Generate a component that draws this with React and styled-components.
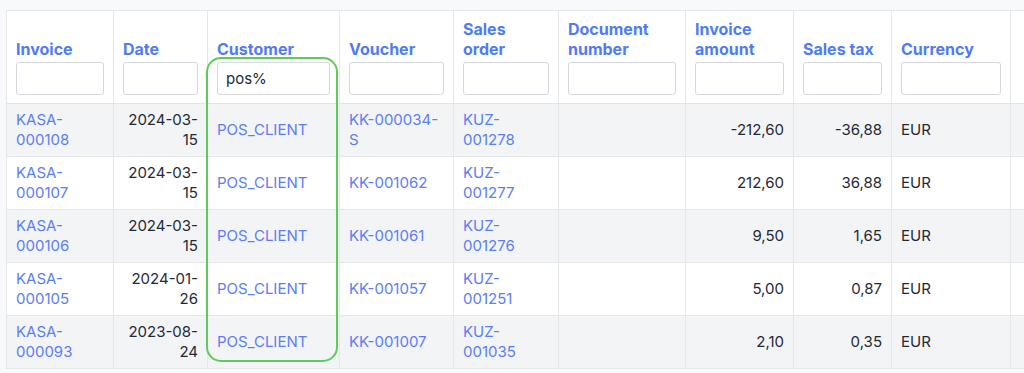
import React from "react";
import styled, { createGlobalStyle } from "styled-components";

const GlobalStyle = createGlobalStyle`
  html, body {
    margin: 0;
    padding: 0;
    overflow: hidden;
    background: #f8f9fb;
    font-family: Inter, "Noto Sans", Arial, sans-serif;
  }
`;

const Page = styled.div`
  padding: 10px 0 0 6px;
  width: 1200px;
`;

const Wrapper = styled.div`
  position: relative;
  display: inline-block;
`;

const Table = styled.table`
  border-collapse: collapse;
  table-layout: fixed;
  width: ${(p) => p.$width}px;
  background: #ffffff;
  border-top: 1px solid #e5e7eb;
  border-left: 1px solid #e5e7eb;
`;

const HeadCell = styled.th`
  vertical-align: bottom;
  text-align: left;
  padding: 8px 9px 8px 9px;
  border-right: 1px solid #e5e7eb;
  border-bottom: 1px solid #e2e4e9;
  font-size: 16px;
  line-height: 20px;
  font-weight: 700;
  color: #4f7bf5;
  background: #ffffff;
`;

const Label = styled.div`
  margin-bottom: 3px;
`;

const FilterInput = styled.input`
  display: block;
  box-sizing: border-box;
  width: 100%;
  height: 33px;
  border: 1px solid #d5d8de;
  border-radius: 3px;
  background: #ffffff;
  padding: 0 8px;
  font-family: Inter, "Noto Sans", Arial, sans-serif;
  font-size: 15px;
  color: #1f2937;
  outline: none;
`;

const Row = styled.tr`
  background: ${(p) => (p.$striped ? "#f3f4f6" : "#ffffff")};
`;

const Cell = styled.td`
  padding: 6px 9px 6px 9px;
  border-right: 1px solid #e5e7eb;
  border-bottom: 1px solid #e5e7eb;
  font-size: 15px;
  line-height: 20px;
  vertical-align: middle;
  text-align: ${(p) => (p.$right ? "right" : "left")};
  color: ${(p) => (p.$link ? "#5b7ef5" : "#1f2937")};
`;

const Highlight = styled.div`
  position: absolute;
  left: 200px;
  top: 47px;
  width: 128px;
  height: 301px;
  border: 2px solid #5ccb5c;
  border-radius: 15px;
  pointer-events: none;
`;

const columns = [
  { key: "invoice", label: "Invoice", width: 107 },
  { key: "date", label: "Date", width: 94 },
  { key: "customer", label: "Customer", width: 132, value: "pos%" },
  { key: "voucher", label: "Voucher", width: 114 },
  { key: "order", label: "Sales order", width: 105 },
  { key: "doc", label: "Document number", width: 127 },
  { key: "amount", label: "Invoice amount", width: 108 },
  { key: "tax", label: "Sales tax", width: 98 },
  { key: "currency", label: "Currency", width: 119 },
  { key: "extra", label: "", width: 120, noFilter: true },
];

const rows = [
  { invoice: "KASA-000108", date: "2024-03-15", voucher: "KK-000034-S", order: "KUZ-001278", amount: "-212,60", tax: "-36,88" },
  { invoice: "KASA-000107", date: "2024-03-15", voucher: "KK-001062", order: "KUZ-001277", amount: "212,60", tax: "36,88" },
  { invoice: "KASA-000106", date: "2024-03-15", voucher: "KK-001061", order: "KUZ-001276", amount: "9,50", tax: "1,65" },
  { invoice: "KASA-000105", date: "2024-01-26", voucher: "KK-001057", order: "KUZ-001251", amount: "5,00", tax: "0,87" },
  { invoice: "KASA-000093", date: "2023-08-24", voucher: "KK-001007", order: "KUZ-001035", amount: "2,10", tax: "0,35" },
];

export default function App() {
  const total = columns.reduce((sum, c) => sum + c.width, 0);

  return (
    <Page>
      <GlobalStyle />
      <Wrapper>
        <Table $width={total}>
          <colgroup>
            {columns.map((c) => (
              <col key={c.key} style={{ width: c.width }} />
            ))}
          </colgroup>
          <thead>
            <tr>
              {columns.map((c) => (
                <HeadCell key={c.key}>
                  {c.label && <Label>{c.label}</Label>}
                  {!c.noFilter && (
                    <FilterInput defaultValue={c.value || ""} />
                  )}
                </HeadCell>
              ))}
            </tr>
          </thead>
          <tbody>
            {rows.map((r, i) => (
              <Row key={r.invoice} $striped={i % 2 === 0}>
                <Cell $link>{r.invoice}</Cell>
                <Cell $right>{r.date}</Cell>
                <Cell $link>POS_CLIENT</Cell>
                <Cell $link>{r.voucher}</Cell>
                <Cell $link>{r.order}</Cell>
                <Cell />
                <Cell $right>{r.amount}</Cell>
                <Cell $right>{r.tax}</Cell>
                <Cell>EUR</Cell>
                <Cell />
              </Row>
            ))}
          </tbody>
        </Table>
        <Highlight />
      </Wrapper>
    </Page>
  );
}
